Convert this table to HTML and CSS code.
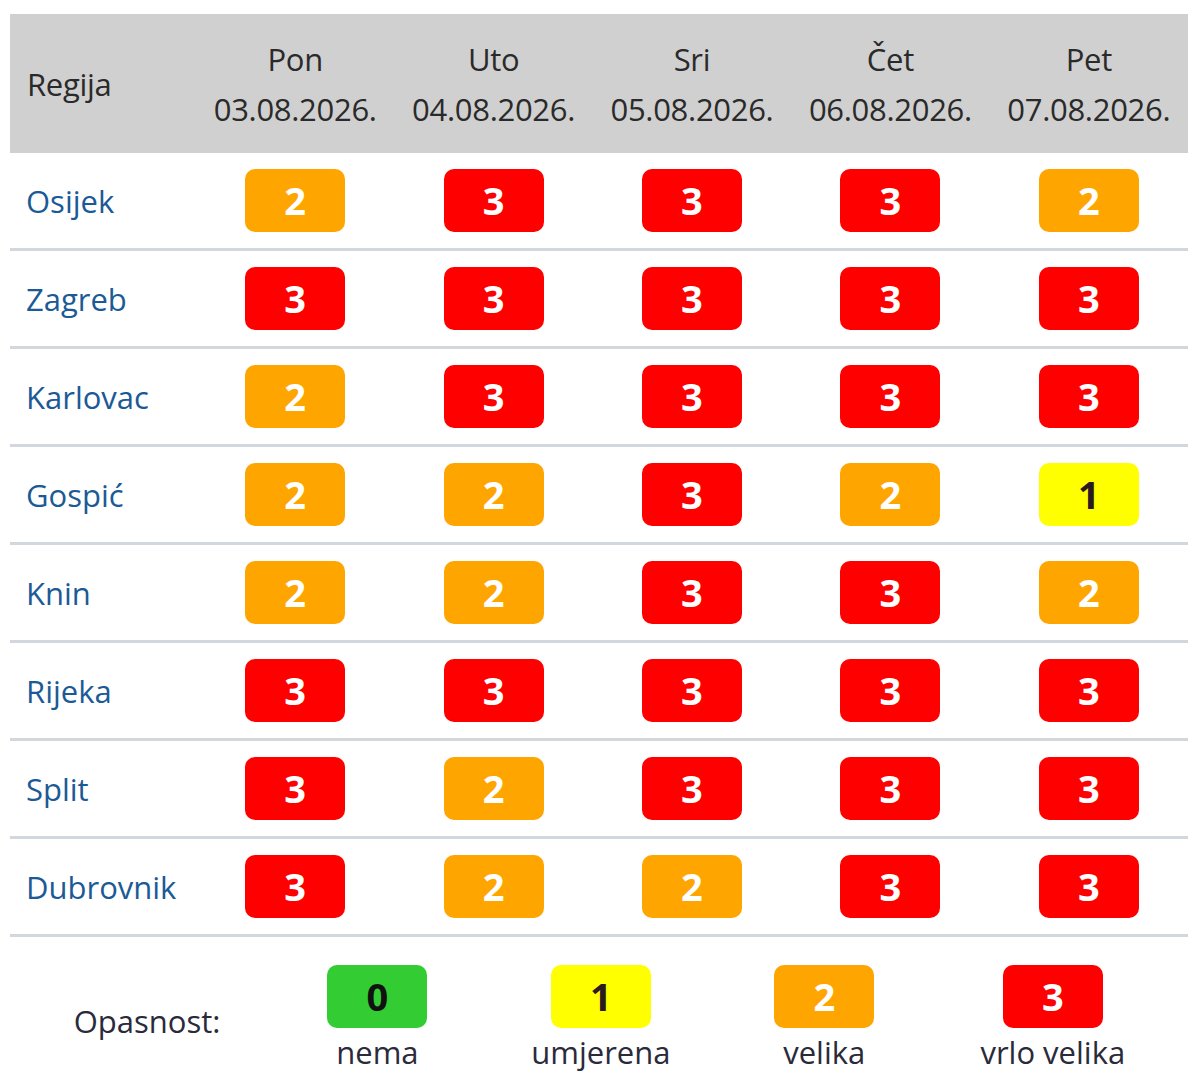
FILE: index.html
```html
<!DOCTYPE html>
<html lang="hr">
<head>
<meta charset="utf-8">
<title>Opasnost</title>
<link rel="stylesheet" href="styles.css">
</head>
<body>
<table class="forecast">
  <colgroup>
    <col class="col-region">
    <col><col><col><col><col>
  </colgroup>
  <thead>
    <tr>
      <th class="th-region">Regija</th>
      <th>Pon<br>03.08.2026.</th>
      <th>Uto<br>04.08.2026.</th>
      <th>Sri<br>05.08.2026.</th>
      <th>Čet<br>06.08.2026.</th>
      <th>Pet<br>07.08.2026.</th>
    </tr>
  </thead>
  <tbody>
    <tr><td class="region">Osijek</td><td><span class="badge l2">2</span></td><td><span class="badge l3">3</span></td><td><span class="badge l3">3</span></td><td><span class="badge l3">3</span></td><td><span class="badge l2">2</span></td></tr>
    <tr><td class="region">Zagreb</td><td><span class="badge l3">3</span></td><td><span class="badge l3">3</span></td><td><span class="badge l3">3</span></td><td><span class="badge l3">3</span></td><td><span class="badge l3">3</span></td></tr>
    <tr><td class="region">Karlovac</td><td><span class="badge l2">2</span></td><td><span class="badge l3">3</span></td><td><span class="badge l3">3</span></td><td><span class="badge l3">3</span></td><td><span class="badge l3">3</span></td></tr>
    <tr><td class="region">Gospić</td><td><span class="badge l2">2</span></td><td><span class="badge l2">2</span></td><td><span class="badge l3">3</span></td><td><span class="badge l2">2</span></td><td><span class="badge l1">1</span></td></tr>
    <tr><td class="region">Knin</td><td><span class="badge l2">2</span></td><td><span class="badge l2">2</span></td><td><span class="badge l3">3</span></td><td><span class="badge l3">3</span></td><td><span class="badge l2">2</span></td></tr>
    <tr><td class="region">Rijeka</td><td><span class="badge l3">3</span></td><td><span class="badge l3">3</span></td><td><span class="badge l3">3</span></td><td><span class="badge l3">3</span></td><td><span class="badge l3">3</span></td></tr>
    <tr><td class="region">Split</td><td><span class="badge l3">3</span></td><td><span class="badge l2">2</span></td><td><span class="badge l3">3</span></td><td><span class="badge l3">3</span></td><td><span class="badge l3">3</span></td></tr>
    <tr><td class="region">Dubrovnik</td><td><span class="badge l3">3</span></td><td><span class="badge l2">2</span></td><td><span class="badge l2">2</span></td><td><span class="badge l3">3</span></td><td><span class="badge l3">3</span></td></tr>
  </tbody>
</table>
<table class="legend">
  <tr>
    <td class="legend-title">Opasnost:</td>
    <td class="legend-item"><span class="badge l0">0</span><div class="legend-label">nema</div></td>
    <td class="legend-item"><span class="badge l1">1</span><div class="legend-label">umjerena</div></td>
    <td class="legend-item"><span class="badge l2">2</span><div class="legend-label">velika</div></td>
    <td class="legend-item"><span class="badge l3">3</span><div class="legend-label">vrlo velika</div></td>
  </tr>
</table>
</body>
</html>
```
FILE: styles.css
```css
html, body {
  background: #ffffff;
}
body {
  margin: 14px 10px 0 10px;
  font-family: "Open Sans", "Noto Sans", sans-serif;
  font-size: 31px;
  color: #333333;
}
table {
  border-collapse: collapse;
  border-spacing: 0;
  width: 100%;
}
.forecast {
  table-layout: fixed;
}
.col-region {
  width: 186px;
}
.forecast th {
  background: #d0d0d0;
  font-weight: normal;
  line-height: 50px;
  padding: 19.5px 0;
  text-align: center;
  color: #2a2a2a;
  letter-spacing: -0.3px;
}
.forecast th.th-region {
  text-align: left;
  padding-left: 17px;
}
.forecast td {
  border-bottom: 3px solid #d2d7dd;
  padding: 16px 0 16px 0;
  text-align: center;
  vertical-align: middle;
  line-height: 50px;
}
.forecast td.region {
  text-align: left;
  padding-left: 16px;
  color: #1c5a95;
}
.badge {
  display: inline-block;
  width: 100px;
  height: 63px;
  border-radius: 10px;
  line-height: 63px;
  font-size: 38px;
  font-weight: bold;
  text-align: center;
  vertical-align: middle;
  color: #ffffff;
}
.l0 { background: #33cc33; color: #111111; }
.l1 { background: #ffff00; color: #2a1a22; }
.l2 { background: #ffa500; color: #ffffff; }
.l3 { background: #ff0000; color: #ffffff; }
.legend td {
  padding: 28px 0 0 0;
  text-align: center;
  vertical-align: middle;
  line-height: 50px;
}
.legend .legend-title {
  color: #2a2a3a;
}
.legend-item .badge {
  display: block;
  margin: 0 auto;
}
.legend-label {
  line-height: 48px;
  color: #2a2a3a;
}
```
